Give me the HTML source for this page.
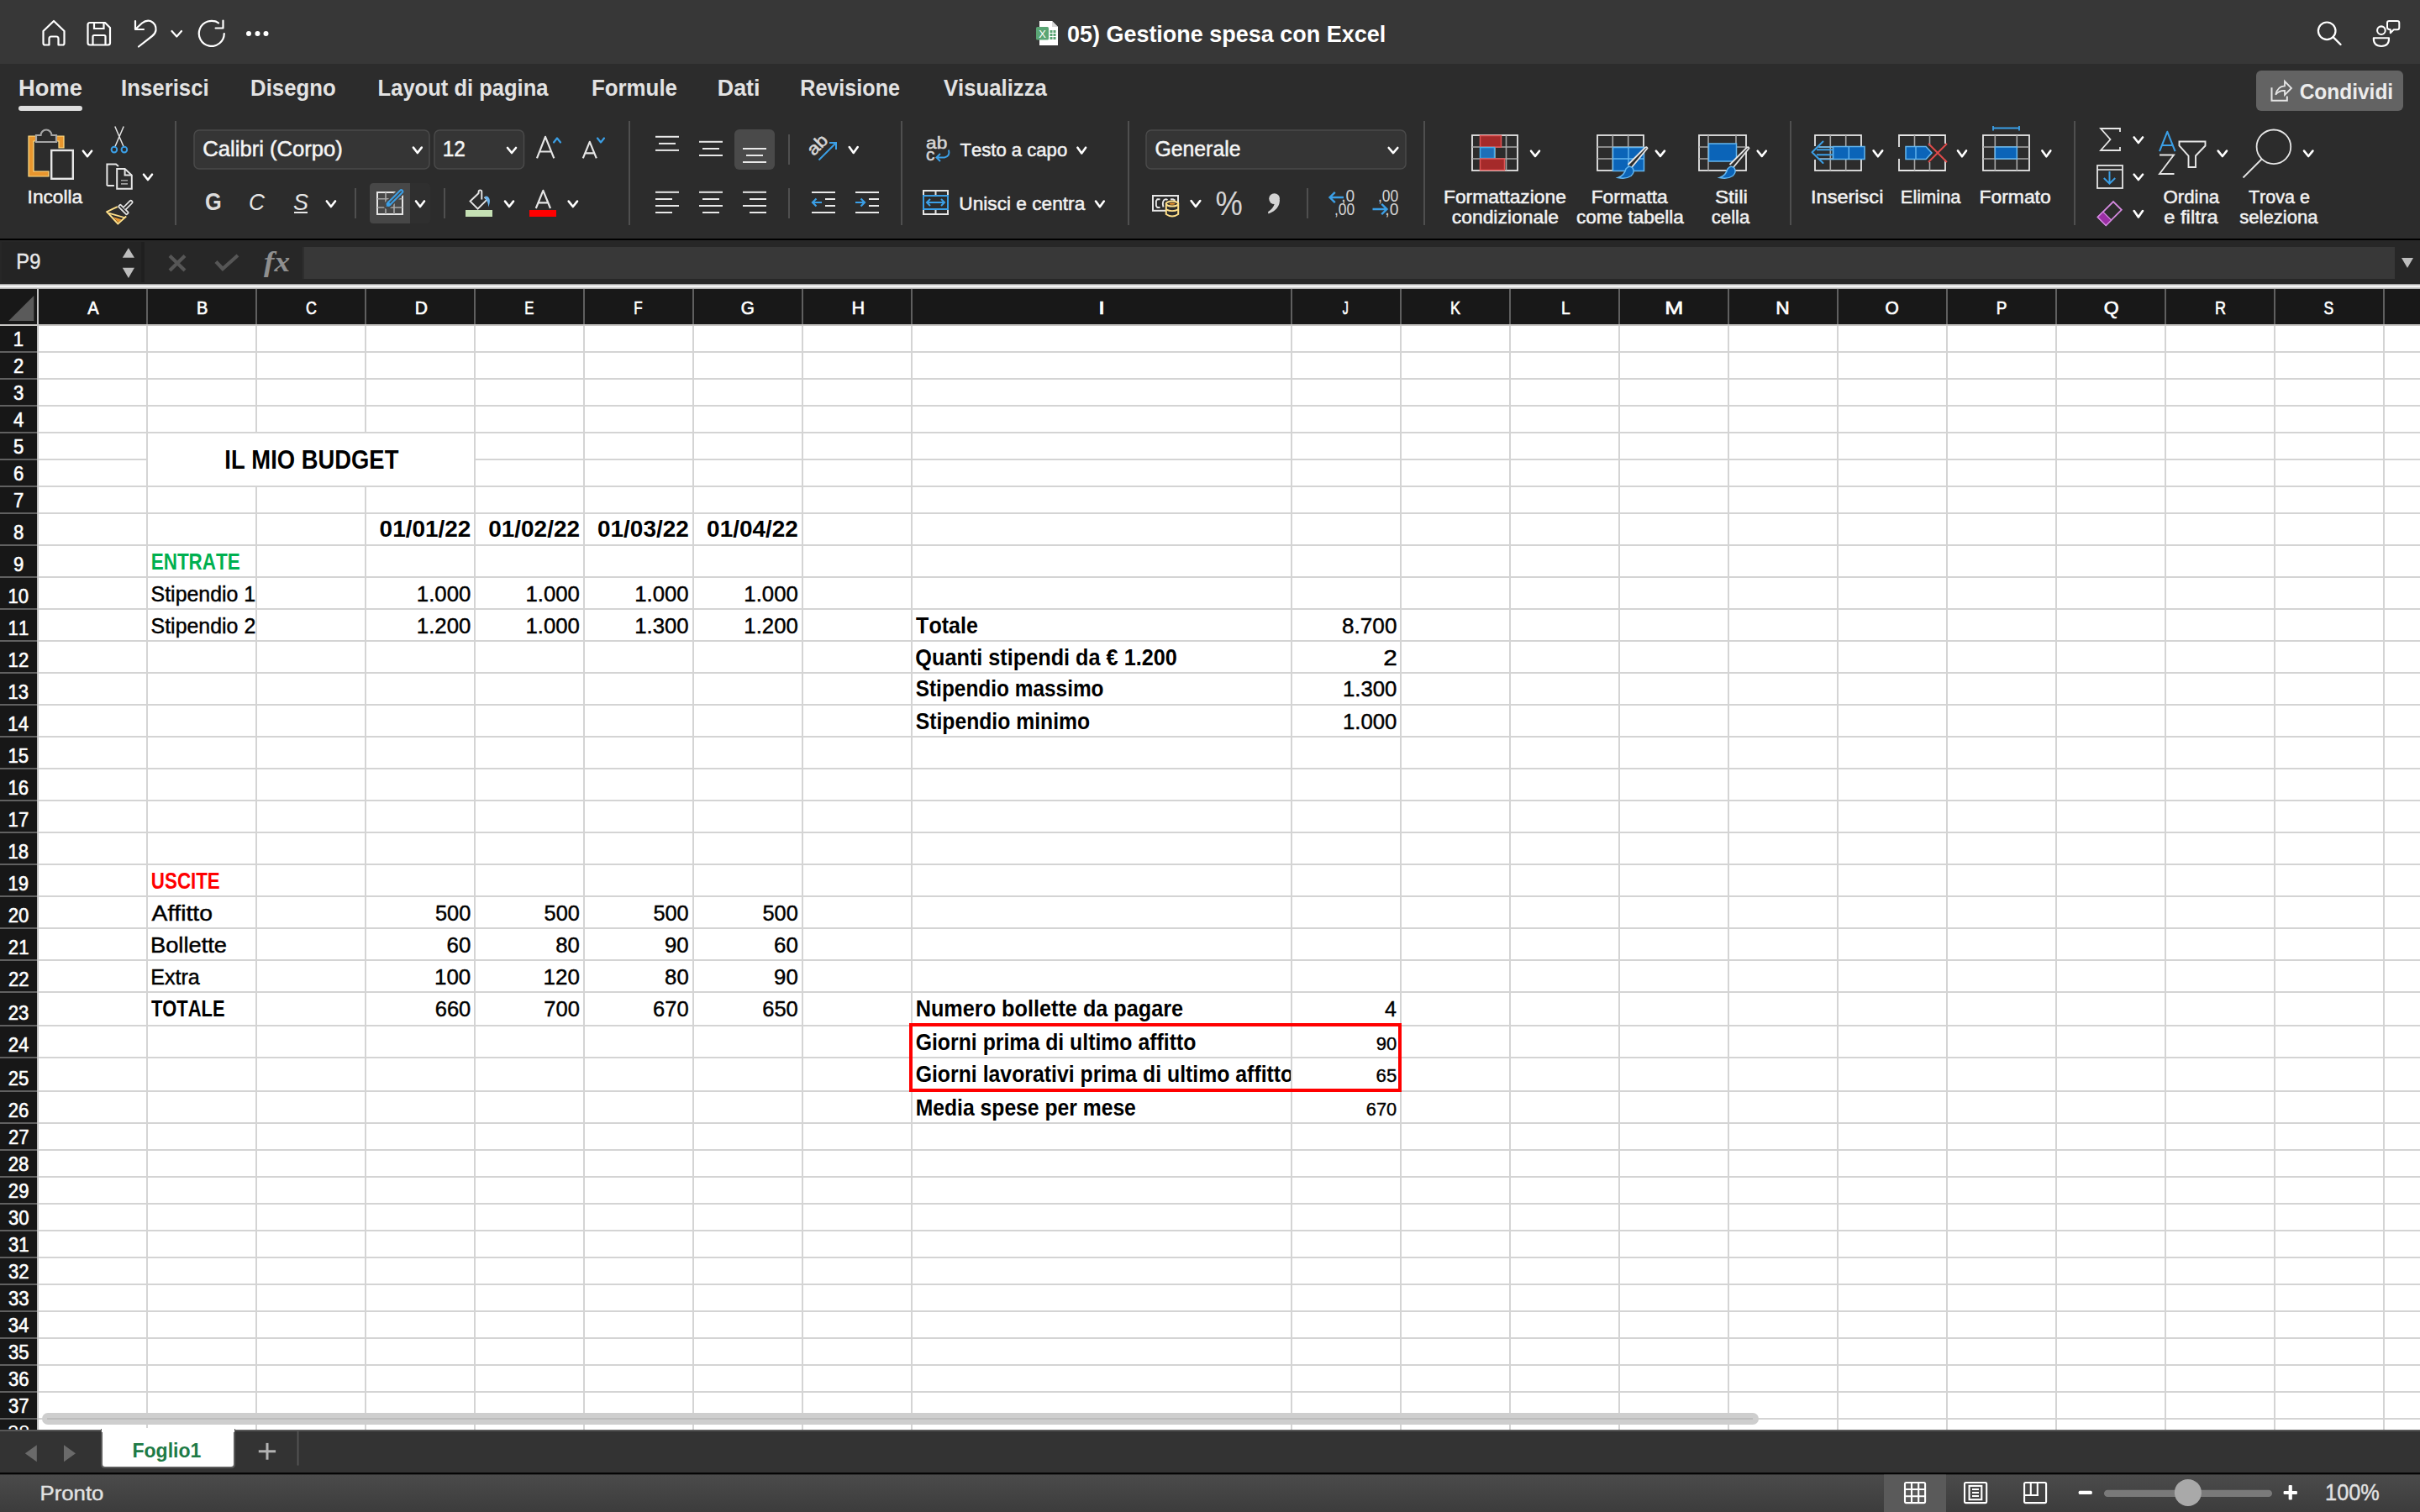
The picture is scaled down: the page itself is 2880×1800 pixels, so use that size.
<!DOCTYPE html><html><head><meta charset="utf-8"><style>html,body{margin:0;padding:0;background:#2c2c2c;overflow:hidden}svg{display:block}text{font-family:"Liberation Sans",sans-serif;font-kerning:none;font-variant-ligatures:none;white-space:pre}</style></head><body>
<svg width="2880" height="1800" viewBox="0 0 2880 1800">
<rect x="0" y="0" width="2880" height="76" fill="#373737" />
<rect x="0" y="76" width="2880" height="208" fill="#2c2c2c" />
<rect x="0" y="284" width="2880" height="2" fill="#000" />
<rect x="0" y="286" width="2880" height="52" fill="#272727" />
<defs><linearGradient id="sep" x1="0" y1="0" x2="0" y2="1"><stop offset="0" stop-color="#a9a9a9"/><stop offset="0.3" stop-color="#ececec"/><stop offset="0.65" stop-color="#f0f0f0"/><stop offset="1" stop-color="#b4b4b4"/></linearGradient><linearGradient id="stat" x1="0" y1="0" x2="0" y2="1"><stop offset="0" stop-color="#4b4b4b"/><stop offset="1" stop-color="#3c3c3c"/></linearGradient></defs>
<rect x="0" y="338" width="2880" height="1" fill="#a2a2a2" />
<rect x="0" y="339" width="2880" height="1" fill="#d2d2d2" />
<rect x="0" y="340" width="2880" height="1" fill="#f6f6f6" />
<rect x="0" y="341" width="2880" height="1" fill="#f3f3f3" />
<rect x="0" y="342" width="2880" height="1" fill="#d0d0d0" />
<rect x="0" y="343" width="2880" height="1" fill="#b2b2b2" />
<path d="M51.5,37 L64,25 L76.5,37 L76.5,51.5 Q76.5,53.5 74.5,53.5 L69.5,53.5 L69.5,46 Q69.5,43.5 67,43.5 L61,43.5 Q58.5,43.5 58.5,46 L58.5,53.5 L53.5,53.5 Q51.5,53.5 51.5,51.5 Z" stroke="#ffffff" stroke-width="2.2" fill="none" stroke-linejoin="round"/>
<path d="M107,27 L125,27 L131,33 L131,51 Q131,53.5 128.5,53.5 L107,53.5 Q104.5,53.5 104.5,51 L104.5,29.5 Q104.5,27 107,27 Z" stroke="#ffffff" stroke-width="2.2" fill="none" stroke-linejoin="round"/>
<path d="M112,27 L112,34 L123.5,34 L123.5,27" stroke="#ffffff" stroke-width="2.2" fill="none" />
<path d="M110.5,53.5 L110.5,43.5 Q110.5,42 112,42 L124,42 Q125.5,42 125.5,43.5 L125.5,53.5" stroke="#ffffff" stroke-width="2.2" fill="none" />
<path d="M161,25 L161,35 L171,35" stroke="#ffffff" stroke-width="2.2" fill="none" stroke-linecap="round" stroke-linejoin="round"/>
<path d="M161.5,34.5 L169,27.5 Q174,23.5 179,25 Q186,28 185.5,36 Q185,40 181,43 L165,55.5" stroke="#ffffff" stroke-width="2.2" fill="none" stroke-linecap="round"/>
<path d="M204.5,37 L210.3,43.5 L216,37" stroke="#ffffff" stroke-width="2.2" fill="none" stroke-linecap="round" stroke-linejoin="round"/>
<path d="M266.8,40 A15,15 0 1 1 260,27.3" stroke="#ffffff" stroke-width="2.2" fill="none" stroke-linecap="round"/>
<path d="M265.5,24.5 L265.5,33.5 L256.6,33.5" stroke="#ffffff" stroke-width="2.2" fill="none" stroke-linecap="round" stroke-linejoin="round"/>
<circle cx="296" cy="40" r="3" fill="#fff"/>
<circle cx="306.5" cy="40" r="3" fill="#fff"/>
<circle cx="316.5" cy="40" r="3" fill="#fff"/>
<path d="M1237,25 L1252,25 L1259,32 L1259,54 L1237,54 Z" stroke="none" stroke-width="0" fill="#ffffff" />
<path d="M1252,25 L1252,32 L1259,32 Z" stroke="none" stroke-width="0" fill="#d8d8d8" />
<rect x="1233" y="32" width="15" height="15.5" fill="#5aa574" rx="1.5" />
<text x="1236.21" y="44.50" font-size="13.08" textLength="8.56" lengthAdjust="spacingAndGlyphs" font-weight="normal" fill="#ffffff">X</text>
<rect x="1249.5" y="36" width="3" height="3" fill="#5aa574" />
<rect x="1253.5" y="36" width="3" height="3" fill="#5aa574" />
<rect x="1249.5" y="40" width="3" height="3" fill="#5aa574" />
<rect x="1253.5" y="40" width="3" height="3" fill="#5aa574" />
<rect x="1249.5" y="44" width="3" height="3" fill="#5aa574" />
<rect x="1253.5" y="44" width="3" height="3" fill="#5aa574" />
<text x="1269.93" y="49.60" font-size="28.49" textLength="379.28" lengthAdjust="spacingAndGlyphs" font-weight="bold" fill="#ffffff">05) Gestione spesa con Excel</text>
<circle cx="2769.2" cy="36.8" r="10.3" fill="none" stroke="#fff" stroke-width="2.2"/>
<path d="M2776.5,44 L2785.5,53" stroke="#ffffff" stroke-width="2.4" fill="none" stroke-linecap="round"/>
<circle cx="2833.9" cy="36.2" r="4.8" fill="none" stroke="#fff" stroke-width="2.1"/>
<path d="M2824.8,45.2 L2843,45.2 Q2843.5,55 2834,55 Q2824.5,55 2824.8,45.2 Z" stroke="#ffffff" stroke-width="2.1" fill="none" stroke-linejoin="round"/>
<path d="M2843.3,25 L2853,25 Q2855.3,25 2855.3,27.3 L2855.3,32.8 Q2855.3,35.3 2853,35.3 L2848.8,35.3 L2844.8,39.2 L2844.8,35.3 Q2841,35 2841,32.8 L2841,27.3 Q2841,25 2843.3,25 Z" stroke="#ffffff" stroke-width="2.0" fill="none" stroke-linejoin="round"/>
<text x="22.08" y="114.00" font-size="27.91" textLength="75.76" lengthAdjust="spacingAndGlyphs" font-weight="bold" fill="#e3e3e3">Home</text>
<text x="144.07" y="114.00" font-size="27.91" textLength="104.65" lengthAdjust="spacingAndGlyphs" font-weight="bold" fill="#e3e3e3">Inserisci</text>
<text x="298.08" y="114.00" font-size="27.91" textLength="101.53" lengthAdjust="spacingAndGlyphs" font-weight="bold" fill="#e3e3e3">Disegno</text>
<text x="449.59" y="114.00" font-size="27.91" textLength="202.95" lengthAdjust="spacingAndGlyphs" font-weight="bold" fill="#e3e3e3">Layout di pagina</text>
<text x="703.97" y="114.00" font-size="27.91" textLength="102.01" lengthAdjust="spacingAndGlyphs" font-weight="bold" fill="#e3e3e3">Formule</text>
<text x="853.80" y="114.00" font-size="27.91" textLength="50.70" lengthAdjust="spacingAndGlyphs" font-weight="bold" fill="#e3e3e3">Dati</text>
<text x="952.22" y="114.00" font-size="27.91" textLength="118.84" lengthAdjust="spacingAndGlyphs" font-weight="bold" fill="#e3e3e3">Revisione</text>
<text x="1122.92" y="114.00" font-size="27.91" textLength="123.01" lengthAdjust="spacingAndGlyphs" font-weight="bold" fill="#e3e3e3">Visualizza</text>
<rect x="22" y="126" width="76" height="6" fill="#dedede" rx="3" />
<rect x="2685" y="84" width="175" height="48" fill="#636363" rx="6" />
<text x="2736.70" y="118.00" font-size="26.16" textLength="111.44" lengthAdjust="spacingAndGlyphs" font-weight="bold" fill="#ececec">Condividi</text>
<path d="M2703.5,104.2 L2703.5,119.8 L2721.8,119.8 L2721.8,114.6" stroke="#e6e6e6" stroke-width="2" fill="none" stroke-linejoin="miter"/>
<path d="M2708.2,112.8 Q2710.5,102.5 2719,102.4 L2719,96.8 L2727,105 L2719,113 L2719,107.8 Q2712,107.5 2708.2,112.8 Z" stroke="#e6e6e6" stroke-width="1.8" fill="none" stroke-linejoin="miter"/>
<path d="M34,162 L76,162 L76,176 L70,176 L70,168 L40,168 L40,204 L58,204 L58,210 L34,210 Z" stroke="#ffe08a" stroke-width="1.2" fill="#e8962e" />
<path d="M43,161 L48.5,161 A6.5,6.5 0 0 1 61.5,161 L67,161 L67,169 L43,169 Z" stroke="#a6a6a6" stroke-width="2.2" fill="#2c2c2c" />
<rect x="61.2" y="179" width="25.6" height="33.8" fill="#2c2c2c" stroke="#e6e6e6" stroke-width="2.4"/>
<path d="M98.9,179.7 L104.0,186.2 L109.1,179.7" stroke="#ffffff" stroke-width="2.6" fill="none" stroke-linecap="round" stroke-linejoin="round"/>
<text x="32.61" y="241.90" font-size="22.67" textLength="65.49" lengthAdjust="spacingAndGlyphs" font-weight="normal" fill="#f2f2f2" stroke="#f2f2f2" stroke-width="0.5">Incolla</text>
<path d="M136.8,150.5 L147.5,175.5 M147.2,150.5 L136.5,175.5" stroke="#e6e6e6" stroke-width="1.5" fill="none" />
<circle cx="135.9" cy="178.1" r="3.3" fill="none" stroke="#3b9fe6" stroke-width="2"/>
<circle cx="147.9" cy="178.1" r="3.3" fill="none" stroke="#3b9fe6" stroke-width="2"/>
<path d="M127.4,221 L127.4,195.4 L138,195.4 L141,198" stroke="#e6e6e6" stroke-width="2.0" fill="none" />
<path d="M127.4,221 L135.9,221" stroke="#e6e6e6" stroke-width="2.0" fill="none" />
<path d="M139.2,201 L148.6,201 L156.8,208.6 L156.8,224.8 L139.2,224.8 Z" stroke="#e6e6e6" stroke-width="2.0" fill="#2c2c2c" />
<path d="M148.6,201 L148.6,208.6 L156.8,208.6" stroke="#e6e6e6" stroke-width="2.0" fill="none" />
<path d="M144,214.8 L152,214.8 M144,218.9 L152,218.9" stroke="#a0a0a0" stroke-width="1.6" fill="none" />
<path d="M171,207.7 L176.0,214 L181,207.7" stroke="#ffffff" stroke-width="2.6" fill="none" stroke-linecap="round" stroke-linejoin="round"/>
<path d="M139.8,246.2 Q133.5,249 127.3,252.2 L140.3,266.4 L150.2,257.4" stroke="#ffe08a" stroke-width="2.0" fill="none" stroke-linejoin="miter"/>
<path d="M129.8,253.8 L148,259" stroke="#ffe08a" stroke-width="1.8" fill="none" />
<path d="M134.5,258.2 L144.8,261.2 L140.6,264.8 Z" stroke="none" stroke-width="0" fill="#e8962e" />
<g transform="translate(145.1,251.3) rotate(-45)"><rect x="0.85" y="-6.9" width="3.4" height="13.8" rx="1" fill="#2c2c2c" stroke="#e6e6e6" stroke-width="1.7"/><path d="M4.25,-1.85 L15,-1.85 A1.85,1.85 0 0 1 15,1.85 L4.25,1.85" fill="#2c2c2c" stroke="#e6e6e6" stroke-width="1.7"/></g>
<rect x="208" y="144" width="2" height="124" fill="#4f4f4f" />
<rect x="231" y="155" width="280" height="46" fill="#353535" rx="6" stroke="#4a4a4a" stroke-width="1.5"/>
<text x="241.30" y="186.30" font-size="26.16" textLength="166.59" lengthAdjust="spacingAndGlyphs" font-weight="normal" fill="#f5f5f5" stroke="#f5f5f5" stroke-width="0.5">Calibri (Corpo)</text>
<path d="M491.9,175.6 L496.85,182 L501.8,175.6" stroke="#ffffff" stroke-width="2.6" fill="none" stroke-linecap="round" stroke-linejoin="round"/>
<rect x="517" y="155" width="106.5" height="46" fill="#353535" rx="6" stroke="#4a4a4a" stroke-width="1.5"/>
<text x="526.64" y="186.20" font-size="26.16" textLength="27.19" lengthAdjust="spacingAndGlyphs" font-weight="normal" fill="#f5f5f5" stroke="#f5f5f5" stroke-width="0.5">12</text>
<path d="M604,176 L609.0,182 L614,176" stroke="#ffffff" stroke-width="2.6" fill="none" stroke-linecap="round" stroke-linejoin="round"/>
<path d="M639,188.3 L649,162.8 L659.3,188.3 M642.2,180.5 L656,180.5" stroke="#e6e6e6" stroke-width="2.2" fill="none" stroke-linejoin="round"/>
<path d="M659,169.5 L663,164.5 L667,169.5" stroke="#3b9fe6" stroke-width="2.2" fill="none" stroke-linecap="round" stroke-linejoin="round"/>
<path d="M693.8,188.3 L701.8,168.8 L709.8,188.3 M696.5,182.3 L707.2,182.3" stroke="#e6e6e6" stroke-width="2.2" fill="none" stroke-linejoin="round"/>
<path d="M711,164.5 L715,169.5 L719,164.5" stroke="#3b9fe6" stroke-width="2.2" fill="none" stroke-linecap="round" stroke-linejoin="round"/>
<rect x="748" y="144" width="2" height="124" fill="#4f4f4f" />
<text x="243.96" y="249.80" font-size="28.78" textLength="19.71" lengthAdjust="spacingAndGlyphs" font-weight="bold" fill="#dcdcdc">G</text>
<text x="296" y="249.8" font-size="28.5" font-style="italic" fill="#e6e6e6" textLength="19" lengthAdjust="spacingAndGlyphs" font-family="Liberation Sans">C</text>
<text x="349" y="249.8" font-size="28.5" font-style="italic" fill="#e6e6e6" textLength="18" lengthAdjust="spacingAndGlyphs" font-family="Liberation Sans">S</text>
<rect x="350" y="252" width="16" height="2" fill="#e6e6e6" />
<path d="M388.8,239.5 L393.9,246 L399,239.5" stroke="#ffffff" stroke-width="2.6" fill="none" stroke-linecap="round" stroke-linejoin="round"/>
<rect x="422" y="224" width="2" height="36" fill="#4f4f4f" />
<path d="M444.5,218 L488,218 L488,266 L444.5,266 Q440,266 440,261.5 L440,222.5 Q440,218 444.5,218 Z" stroke="none" stroke-width="0" fill="#474747" />
<path d="M488,218 L507.5,218 Q512,218 512,222.5 L512,261.5 Q512,266 507.5,266 L488,266 Z" stroke="none" stroke-width="0" fill="#2f2f2f" />
<rect x="449" y="229" width="30" height="26" fill="none" stroke="#e6e6e6" stroke-width="2"/>
<path d="M459,229 L459,255 M469,229 L469,255 M449,236.8 L479,236.8 M449,247 L479,247" stroke="#a8a8a8" stroke-width="1.6" fill="none" />
<path d="M461,244.5 L477,228.5" stroke="#474747" stroke-width="9" fill="none" stroke-linecap="round"/>
<path d="M462.5,243 L477.5,228" stroke="#3b9fe6" stroke-width="5.5" fill="none" stroke-linecap="round"/>
<path d="M462.5,243 L477.5,228" stroke="#474747" stroke-width="1.6" fill="none" stroke-linecap="round"/>
<path d="M459.5,246 L461.5,239.5 L466,244 Z" stroke="none" stroke-width="0" fill="#3b9fe6" />
<path d="M495,239.5 L500.0,246 L505,239.5" stroke="#ffffff" stroke-width="2.6" fill="none" stroke-linecap="round" stroke-linejoin="round"/>
<rect x="528" y="224" width="2" height="36" fill="#4f4f4f" />
<path d="M569.6,230 L559.6,239.6 L568.6,248.6 L579.6,237.6 L576.6,234.6" stroke="#e6e6e6" stroke-width="2.0" fill="none" stroke-linejoin="miter"/>
<path d="M569.6,230.5 L569.6,228.2 A1.85,1.85 0 0 1 573.3,228.2 L573.3,237.6" stroke="#e6e6e6" stroke-width="1.9" fill="none" />
<path d="M576.5,234.8 Q578,232.5 580.5,234 Q583.5,236.5 582.8,241 L581.5,246.4 Q580.5,240 578.5,237.8 Z" stroke="none" stroke-width="0" fill="#6cb4ee" />
<rect x="554" y="250" width="32" height="8" fill="#c5e0b4" />
<path d="M601,239.6 L606.0,246 L611,239.6" stroke="#ffffff" stroke-width="2.6" fill="none" stroke-linecap="round" stroke-linejoin="round"/>
<path d="M637.8,248 L646.4,226.8 L655,248 M640.5,241.3 L652.3,241.3" stroke="#e6e6e6" stroke-width="2.2" fill="none" stroke-linejoin="round"/>
<rect x="630" y="250" width="32" height="8" fill="#ff0000" />
<path d="M676.7,239.6 L681.85,246 L687,239.6" stroke="#ffffff" stroke-width="2.6" fill="none" stroke-linecap="round" stroke-linejoin="round"/>
<rect x="780.0" y="161.8" width="28" height="2" fill="#e8e8e8" />
<rect x="784.0" y="169.9" width="20" height="2" fill="#e8e8e8" />
<rect x="780.0" y="177.9" width="28" height="2" fill="#e8e8e8" />
<rect x="832.0" y="167.8" width="28" height="2" fill="#e8e8e8" />
<rect x="836.0" y="176" width="20" height="2" fill="#e8e8e8" />
<rect x="832.0" y="184" width="28" height="2" fill="#e8e8e8" />
<rect x="874" y="154" width="48" height="48" fill="#4a4a4a" rx="6" />
<rect x="884.0" y="176" width="28" height="2" fill="#e8e8e8" />
<rect x="888.0" y="184" width="20" height="2" fill="#e8e8e8" />
<rect x="884.0" y="192" width="28" height="2" fill="#e8e8e8" />
<rect x="938" y="160" width="2" height="36" fill="#4f4f4f" />
<text x="0" y="0" font-size="20.5" fill="#d6d6d6" stroke="#d6d6d6" stroke-width="0.6" transform="translate(968.6,186.3) rotate(-45)" textLength="25.5" lengthAdjust="spacingAndGlyphs">ab</text>
<path d="M974.5,190.5 L995,170" stroke="#3b9fe6" stroke-width="2.0" fill="none" />
<path d="M987,170 L995,170 L995,178" stroke="#3b9fe6" stroke-width="2.0" fill="none" />
<path d="M1010.8,175 L1015.75,182 L1020.7,175" stroke="#ffffff" stroke-width="2.6" fill="none" stroke-linecap="round" stroke-linejoin="round"/>
<rect x="780" y="227.8" width="28" height="2" fill="#e8e8e8" />
<rect x="780" y="236" width="20" height="2" fill="#e8e8e8" />
<rect x="780" y="244" width="28" height="2" fill="#e8e8e8" />
<rect x="780" y="252" width="20" height="2" fill="#e8e8e8" />
<rect x="832.0" y="227.8" width="28" height="2" fill="#e8e8e8" />
<rect x="836.0" y="236" width="20" height="2" fill="#e8e8e8" />
<rect x="832.0" y="244" width="28" height="2" fill="#e8e8e8" />
<rect x="836.0" y="252" width="20" height="2" fill="#e8e8e8" />
<rect x="884" y="227.8" width="28" height="2" fill="#e8e8e8" />
<rect x="892" y="236" width="20" height="2" fill="#e8e8e8" />
<rect x="884" y="244" width="28" height="2" fill="#e8e8e8" />
<rect x="892" y="252" width="20" height="2" fill="#e8e8e8" />
<rect x="938" y="224" width="2" height="36" fill="#4f4f4f" />
<rect x="966" y="228" width="28" height="2" fill="#e8e8e8" />
<rect x="982" y="236" width="12" height="2" fill="#e8e8e8" />
<rect x="982" y="244" width="12" height="2" fill="#e8e8e8" />
<rect x="966" y="252" width="28" height="2" fill="#e8e8e8" />
<path d="M978,241 L967.5,241 M971.5,236.5 L967,241 L971.5,245.5" stroke="#3b9fe6" stroke-width="2.2" fill="none" />
<rect x="1018" y="228" width="28" height="2" fill="#e8e8e8" />
<rect x="1034" y="236" width="12" height="2" fill="#e8e8e8" />
<rect x="1034" y="244" width="12" height="2" fill="#e8e8e8" />
<rect x="1018" y="252" width="28" height="2" fill="#e8e8e8" />
<path d="M1018,241 L1028.5,241 M1024.5,236.5 L1029,241 L1024.5,245.5" stroke="#3b9fe6" stroke-width="2.2" fill="none" />
<rect x="1072" y="144" width="2" height="124" fill="#4f4f4f" />
<text x="1102.03" y="177.00" font-size="20.35" textLength="25.32" lengthAdjust="spacingAndGlyphs" font-weight="normal" fill="#d6d6d6" stroke="#d6d6d6" stroke-width="0.5">ab</text>
<text x="1102.11" y="191.40" font-size="19.62" textLength="10.44" lengthAdjust="spacingAndGlyphs" font-weight="normal" fill="#d6d6d6" stroke="#d6d6d6" stroke-width="0.5">c</text>
<path d="M1129,178.5 Q1131,186 1124,187.5 L1115,187.5 M1119,183 L1114.5,187.5 L1119,192" stroke="#3b9fe6" stroke-width="2.0" fill="none" />
<text x="1142.40" y="186.10" font-size="22.82" textLength="127.83" lengthAdjust="spacingAndGlyphs" font-weight="normal" fill="#f2f2f2" stroke="#f2f2f2" stroke-width="0.5">Testo a capo</text>
<path d="M1282.4,175.7 L1287.25,182.4 L1292.1,175.7" stroke="#ffffff" stroke-width="2.6" fill="none" stroke-linecap="round" stroke-linejoin="round"/>
<rect x="1099" y="227" width="29" height="28" fill="none" stroke="#e6e6e6" stroke-width="2"/>
<path d="M1113.5,227 L1113.5,233 M1113.5,249 L1113.5,255" stroke="#e6e6e6" stroke-width="2" fill="none" />
<rect x="1099" y="233" width="29" height="16" fill="#2c2c2c" stroke="#3b9fe6" stroke-width="2"/>
<path d="M1103,241 L1124,241 M1107,237 L1103,241 L1107,245 M1120,237 L1124,241 L1120,245" stroke="#3b9fe6" stroke-width="2" fill="none" />
<text x="1141.35" y="249.70" font-size="22.82" textLength="149.95" lengthAdjust="spacingAndGlyphs" font-weight="normal" fill="#f2f2f2" stroke="#f2f2f2" stroke-width="0.5">Unisci e centra</text>
<path d="M1304,239.6 L1308.9,246.2 L1313.8,239.6" stroke="#ffffff" stroke-width="2.6" fill="none" stroke-linecap="round" stroke-linejoin="round"/>
<rect x="1342" y="144" width="2" height="124" fill="#4f4f4f" />
<rect x="1364" y="155" width="309" height="46" fill="#353535" rx="6" stroke="#4a4a4a" stroke-width="1.5"/>
<text x="1374.45" y="186.10" font-size="25.87" textLength="102.05" lengthAdjust="spacingAndGlyphs" font-weight="normal" fill="#f5f5f5" stroke="#f5f5f5" stroke-width="0.5">Generale</text>
<path d="M1652.7,176 L1658.0,182.1 L1663.3,176" stroke="#ffffff" stroke-width="2.6" fill="none" stroke-linecap="round" stroke-linejoin="round"/>
<rect x="1372" y="233" width="30" height="17.8" fill="none" stroke="#e6e6e6" stroke-width="2"/>
<path d="M1380.5,237.2 L1377.3,237.2 L1375.9,239.2 L1375.9,245 L1377.3,247 L1380.5,247" stroke="#e6e6e6" stroke-width="1.9" fill="none" />
<path d="M1384.5,246.5 Q1383,241 1385,238.5 Q1387,236.3 1389.5,238" stroke="#e6e6e6" stroke-width="1.9" fill="none" />
<path d="M1393,237.3 L1396,237.3 L1398.5,238.6" stroke="#e6e6e6" stroke-width="1.9" fill="none" />
<path d="M1387.8,242.6 L1387.8,255 Q1395,260 1402.2,255 L1402.2,242.6 Z" stroke="#ffe08a" stroke-width="2.0" fill="#2c2c2c" />
<ellipse cx="1395" cy="242.6" rx="7.2" ry="3" fill="#2c2c2c" stroke="#ffe08a" stroke-width="2"/>
<ellipse cx="1395" cy="242.6" rx="3.5" ry="1.2" fill="#e8902a"/>
<path d="M1387.8,249.3 Q1395,253 1402.2,249.3" stroke="#ffe08a" stroke-width="1.9" fill="none" />
<path d="M1417.6,239 L1422.9499999999998,246 L1428.3,239" stroke="#ffffff" stroke-width="2.6" fill="none" stroke-linecap="round" stroke-linejoin="round"/>
<text x="1446.61" y="256.00" font-size="40.70" textLength="32.29" lengthAdjust="spacingAndGlyphs" font-weight="normal" fill="#d4d4d4">%</text>
<circle cx="1516.6" cy="236.6" r="6.4" fill="#d4d4d4"/>
<path d="M1522.9,237.5 Q1523.5,249 1509.5,254.5 L1509,252.3 Q1515.5,248 1516.8,242.5 Z" stroke="none" stroke-width="0" fill="#d4d4d4" />
<rect x="1555" y="224" width="2" height="36" fill="#4f4f4f" />
<text x="1596.28" y="240.00" font-size="20.35" textLength="15.97" lengthAdjust="spacingAndGlyphs" font-weight="normal" fill="#d4d4d4">,0</text>
<text x="1587.93" y="255.80" font-size="20.35" textLength="24.25" lengthAdjust="spacingAndGlyphs" font-weight="normal" fill="#d4d4d4">,00</text>
<path d="M1599,235 L1582.5,235 M1588.8,228.8 L1582.5,235 L1588.8,241.2" stroke="#3b9fe6" stroke-width="2.4" fill="none" />
<text x="1639.93" y="240.00" font-size="20.35" textLength="24.36" lengthAdjust="spacingAndGlyphs" font-weight="normal" fill="#d4d4d4">,00</text>
<text x="1648.27" y="255.80" font-size="20.35" textLength="16.09" lengthAdjust="spacingAndGlyphs" font-weight="normal" fill="#d4d4d4">,0</text>
<path d="M1633.5,249 L1650.5,249 M1644.2,242.8 L1650.5,249 L1644.2,255.2" stroke="#3b9fe6" stroke-width="2.4" fill="none" />
<rect x="1694" y="144" width="2" height="124" fill="#4f4f4f" />
<rect x="1752" y="161" width="54" height="42" fill="none" stroke="#e6e6e6" stroke-width="1.8"/>
<path d="M1765.5,161 L1765.5,203" stroke="#a8a8a8" stroke-width="1.6" fill="none" />
<path d="M1779.0,161 L1779.0,203" stroke="#a8a8a8" stroke-width="1.6" fill="none" />
<path d="M1792.5,161 L1792.5,203" stroke="#a8a8a8" stroke-width="1.6" fill="none" />
<path d="M1752,175.0 L1806,175.0" stroke="#a8a8a8" stroke-width="1.6" fill="none" />
<path d="M1752,189.0 L1806,189.0" stroke="#a8a8a8" stroke-width="1.6" fill="none" />
<rect x="1761.5" y="161.5" width="25" height="13.5" fill="#a52a2a" stroke="#e05555" stroke-width="1.5"/>
<rect x="1761.5" y="175.5" width="17" height="13" fill="#1e6fb8" stroke="#4aaee8" stroke-width="1.5"/>
<rect x="1761.5" y="189" width="29" height="13.5" fill="#a52a2a" stroke="#e05555" stroke-width="1.5"/>
<path d="M1822,179.7 L1827.0,185.9 L1832,179.7" stroke="#ffffff" stroke-width="2.6" fill="none" stroke-linecap="round" stroke-linejoin="round"/>
<text x="1717.93" y="241.90" font-size="22.67" textLength="146.09" lengthAdjust="spacingAndGlyphs" font-weight="normal" fill="#f2f2f2" stroke="#f2f2f2" stroke-width="0.5">Formattazione</text>
<text x="1727.73" y="265.50" font-size="22.67" textLength="127.29" lengthAdjust="spacingAndGlyphs" font-weight="normal" fill="#f2f2f2" stroke="#f2f2f2" stroke-width="0.5">condizionale</text>
<rect x="1901" y="161" width="55" height="42" fill="none" stroke="#e6e6e6" stroke-width="1.8"/>
<path d="M1919.3,161 L1919.3,203" stroke="#a8a8a8" stroke-width="1.6" fill="none" />
<path d="M1937.7,161 L1937.7,203" stroke="#a8a8a8" stroke-width="1.6" fill="none" />
<path d="M1901,175.0 L1956,175.0" stroke="#a8a8a8" stroke-width="1.6" fill="none" />
<path d="M1901,189.0 L1956,189.0" stroke="#a8a8a8" stroke-width="1.6" fill="none" />
<rect x="1919.5" y="175.5" width="37" height="28" fill="#0b64b8" stroke="#63b6f0" stroke-width="1.5"/>
<path d="M1938,175.5 L1938,203 M1919.5,189 L1956,189" stroke="#63b6f0" stroke-width="1.4" fill="none" />
<path d="M1937.5,196 L1957.5,176 Q1960,174 1960.5,176.5 L1942,199" stroke="#e6e6e6" stroke-width="1.8" fill="#2c2c2c" />
<path d="M1925.5,211.5 Q1933,209 1935,201 Q1939,196 1943,200 Q1946,205 1941,209.5 Q1935,213.5 1925.5,211.5 Z" stroke="#63b6f0" stroke-width="1.5" fill="#0b64b8" />
<path d="M1970.8,179.7 L1975.9,185.9 L1981,179.7" stroke="#ffffff" stroke-width="2.6" fill="none" stroke-linecap="round" stroke-linejoin="round"/>
<text x="1893.63" y="241.90" font-size="22.67" textLength="91.07" lengthAdjust="spacingAndGlyphs" font-weight="normal" fill="#f2f2f2" stroke="#f2f2f2" stroke-width="0.5">Formatta</text>
<text x="1875.94" y="265.50" font-size="22.67" textLength="127.96" lengthAdjust="spacingAndGlyphs" font-weight="normal" fill="#f2f2f2" stroke="#f2f2f2" stroke-width="0.5">come tabella</text>
<rect x="2022" y="161" width="56" height="42" fill="none" stroke="#e6e6e6" stroke-width="1.8"/>
<path d="M2033,161 L2033,203 M2066,161 L2066,175 M2022,175 L2078,175 M2022,189 L2033,189" stroke="#a8a8a8" stroke-width="1.6" fill="none" />
<rect x="2033.5" y="171" width="33" height="21" fill="#0b64b8" stroke="#63b6f0" stroke-width="1.5"/>
<path d="M2058.5,196 L2078.5,176 Q2081,174 2081.5,176.5 L2063,199" stroke="#e6e6e6" stroke-width="1.8" fill="#2c2c2c" />
<path d="M2046.5,211.5 Q2054,209 2056,201 Q2060,196 2064,200 Q2067,205 2062,209.5 Q2056,213.5 2046.5,211.5 Z" stroke="#63b6f0" stroke-width="1.5" fill="#0b64b8" />
<path d="M2091.7,179.7 L2096.75,185.9 L2101.8,179.7" stroke="#ffffff" stroke-width="2.6" fill="none" stroke-linecap="round" stroke-linejoin="round"/>
<text x="2040.90" y="241.90" font-size="22.67" textLength="39.03" lengthAdjust="spacingAndGlyphs" font-weight="normal" fill="#f2f2f2" stroke="#f2f2f2" stroke-width="0.5">Stili</text>
<text x="2036.76" y="265.50" font-size="22.67" textLength="45.64" lengthAdjust="spacingAndGlyphs" font-weight="normal" fill="#f2f2f2" stroke="#f2f2f2" stroke-width="0.5">cella</text>
<rect x="2130" y="144" width="2" height="124" fill="#4f4f4f" />
<rect x="2160" y="161" width="55" height="42" fill="none" stroke="#e6e6e6" stroke-width="1.8"/>
<path d="M2178.3,161 L2178.3,203" stroke="#a8a8a8" stroke-width="1.6" fill="none" />
<path d="M2196.7,161 L2196.7,203" stroke="#a8a8a8" stroke-width="1.6" fill="none" />
<path d="M2160,175.0 L2215,175.0" stroke="#a8a8a8" stroke-width="1.6" fill="none" />
<path d="M2160,189.0 L2215,189.0" stroke="#a8a8a8" stroke-width="1.6" fill="none" />
<rect x="2157" y="174" width="6" height="16" fill="#2c2c2c" />
<rect x="2181.5" y="174.5" width="37.5" height="15" fill="#0b64b8" stroke="#63b6f0" stroke-width="1.5"/>
<path d="M2200.3,174.5 L2200.3,189.5" stroke="#63b6f0" stroke-width="1.4" fill="none" />
<path d="M2165,175 L2181.5,175 L2181.5,189.5 L2165,189.5" stroke="#63b6f0" stroke-width="1.4" fill="none" />
<path d="M2162,178.3 L2181.5,178.3 M2162,184.3 L2181.5,184.3" stroke="#3b9fe6" stroke-width="2.0" fill="none" />
<path d="M2169.5,168.5 L2156.5,181.3 L2169.5,194" stroke="#3b9fe6" stroke-width="2.0" fill="none" stroke-linecap="round" stroke-linejoin="round"/>
<path d="M2229.6,179.4 L2234.8999999999996,186.3 L2240.2,179.4" stroke="#ffffff" stroke-width="2.6" fill="none" stroke-linecap="round" stroke-linejoin="round"/>
<text x="2155.03" y="241.90" font-size="22.67" textLength="86.36" lengthAdjust="spacingAndGlyphs" font-weight="normal" fill="#f2f2f2" stroke="#f2f2f2" stroke-width="0.5">Inserisci</text>
<path d="M2260,175 L2260,161 L2315,161 L2315,171 M2315,190 L2315,203 L2260,203 L2260,189" stroke="#e6e6e6" stroke-width="1.8" fill="none" />
<path d="M2278.5,161 L2278.5,175 M2296.5,161 L2296.5,174 M2278.5,189 L2278.5,203 M2296.5,193 L2296.5,203" stroke="#a8a8a8" stroke-width="1.6" fill="none" />
<path d="M2268,174.5 L2292,174.5 L2299,182 L2292,189.5 L2268,189.5 Z" stroke="#63b6f0" stroke-width="1.5" fill="#0b64b8" />
<path d="M2280,174.5 L2280,189.5" stroke="#63b6f0" stroke-width="1.4" fill="none" />
<path d="M2295,171 L2317,193 M2317,171 L2295,193" stroke="#e04a4a" stroke-width="1.9" fill="none" />
<path d="M2330,179.4 L2335.0,186.3 L2340,179.4" stroke="#ffffff" stroke-width="2.6" fill="none" stroke-linecap="round" stroke-linejoin="round"/>
<text x="2261.81" y="241.90" font-size="22.67" textLength="71.69" lengthAdjust="spacingAndGlyphs" font-weight="normal" fill="#f2f2f2" stroke="#f2f2f2" stroke-width="0.5">Elimina</text>
<rect x="2360" y="161" width="55" height="42" fill="none" stroke="#e6e6e6" stroke-width="1.8"/>
<path d="M2374.3,161 L2374.3,203 M2400.3,161 L2400.3,203 M2360,175 L2415,175 M2360,189 L2415,189" stroke="#a8a8a8" stroke-width="1.6" fill="none" />
<rect x="2374.3" y="175" width="26" height="14" fill="#0b64b8" stroke="#63b6f0" stroke-width="1.5"/>
<path d="M2372,152.5 L2403,152.5 M2372,150 L2372,155.5 M2403,150 L2403,155.5" stroke="#3b9fe6" stroke-width="1.8" fill="none" />
<path d="M2430.4,179.4 L2435.3500000000004,186.3 L2440.3,179.4" stroke="#ffffff" stroke-width="2.6" fill="none" stroke-linecap="round" stroke-linejoin="round"/>
<text x="2355.42" y="241.90" font-size="22.67" textLength="85.34" lengthAdjust="spacingAndGlyphs" font-weight="normal" fill="#f2f2f2" stroke="#f2f2f2" stroke-width="0.5">Formato</text>
<rect x="2468" y="144" width="2" height="124" fill="#4f4f4f" />
<path d="M2523,157 L2523,153 L2500,153 L2511.5,166 L2500,179 L2523,179 L2523,175" stroke="#e6e6e6" stroke-width="1.8" fill="none" />
<path d="M2539.7,163.5 L2544.85,170 L2550,163.5" stroke="#ffffff" stroke-width="2.6" fill="none" stroke-linecap="round" stroke-linejoin="round"/>
<rect x="2496" y="197" width="30" height="27" fill="none" stroke="#e6e6e6" stroke-width="1.8"/>
<path d="M2496,202 L2526,202" stroke="#e6e6e6" stroke-width="1.6" fill="none" />
<path d="M2510.5,204 L2510.5,218.5 M2503.8,212 L2510.5,218.7 L2517.2,212" stroke="#3b9fe6" stroke-width="2.0" fill="none" />
<path d="M2539.7,207.7 L2544.85,214 L2550,207.7" stroke="#ffffff" stroke-width="2.6" fill="none" stroke-linecap="round" stroke-linejoin="round"/>
<path d="M2496.5,258.5 L2515,240 L2524.8,249.8 L2506.3,268.3 Z" stroke="#d58ae0" stroke-width="1.8" fill="#2c2c2c" />
<path d="M2496.5,258.5 L2502.8,252.2 L2512.6,262 L2506.3,268.3 Z" stroke="#d58ae0" stroke-width="1.2" fill="#9b2fa5" />
<path d="M2539.7,251 L2544.85,258.4 L2550,251" stroke="#ffffff" stroke-width="2.6" fill="none" stroke-linecap="round" stroke-linejoin="round"/>
<path d="M2570,180.2 L2579.3,156.8 L2588.6,180.2 M2573.2,173 L2585.4,173" stroke="#3b9fe6" stroke-width="2.1" fill="none" stroke-linejoin="round"/>
<path d="M2570,184.5 L2587,184.5 L2570,207 L2587.5,207" stroke="#e6e6e6" stroke-width="1.9" fill="none" />
<path d="M2593.5,168.5 L2624.5,168.5 L2624.5,173.5 L2613,185.5 L2613,199 L2604.5,199 L2604.5,185.5 L2593.5,173.5 Z" stroke="#e6e6e6" stroke-width="1.9" fill="none" stroke-linejoin="miter"/>
<path d="M2639.7,179.6 L2644.85,186 L2650,179.6" stroke="#ffffff" stroke-width="2.6" fill="none" stroke-linecap="round" stroke-linejoin="round"/>
<text x="2574.45" y="241.90" font-size="22.67" textLength="66.75" lengthAdjust="spacingAndGlyphs" font-weight="normal" fill="#f2f2f2" stroke="#f2f2f2" stroke-width="0.5">Ordina</text>
<text x="2575.29" y="265.70" font-size="22.67" textLength="64.51" lengthAdjust="spacingAndGlyphs" font-weight="normal" fill="#f2f2f2" stroke="#f2f2f2" stroke-width="0.5">e filtra</text>
<circle cx="2705.9" cy="174.8" r="20.3" fill="none" stroke="#e6e6e6" stroke-width="1.8"/>
<path d="M2691.5,189.5 L2669.5,211.5" stroke="#e6e6e6" stroke-width="1.8" fill="none" />
<path d="M2742,179.6 L2747.2,186 L2752.4,179.6" stroke="#ffffff" stroke-width="2.6" fill="none" stroke-linecap="round" stroke-linejoin="round"/>
<text x="2675.92" y="241.90" font-size="22.67" textLength="73.04" lengthAdjust="spacingAndGlyphs" font-weight="normal" fill="#f2f2f2" stroke="#f2f2f2" stroke-width="0.5">Trova e</text>
<text x="2665.18" y="265.70" font-size="22.67" textLength="93.42" lengthAdjust="spacingAndGlyphs" font-weight="normal" fill="#f2f2f2" stroke="#f2f2f2" stroke-width="0.5">seleziona</text>
<rect x="2" y="288" width="166" height="48" fill="#242424" />
<rect x="168" y="288" width="4" height="48" fill="#1f1f1f" />
<text x="19.36" y="320.00" font-size="26.45" textLength="28.96" lengthAdjust="spacingAndGlyphs" font-weight="normal" fill="#e8e8e8" stroke="#e8e8e8" stroke-width="0.4">P9</text>
<path d="M145.8,306.8 L152.9,295.2 L160,306.8 Z" stroke="none" stroke-width="0" fill="#bdbdbd" />
<path d="M145.8,318.8 L160,318.8 L152.9,330.9 Z" stroke="none" stroke-width="0" fill="#bdbdbd" />
<path d="M202,304.5 L220,322 M220,304.5 L202,322" stroke="#565656" stroke-width="4.2" fill="none" />
<path d="M257,311.5 L265,320 L283,304" stroke="#565656" stroke-width="4.2" fill="none" />
<text x="314" y="323" font-size="34" font-style="italic" font-weight="bold" style="font-family:Liberation Serif" fill="#8f8f8f" textLength="31" lengthAdjust="spacingAndGlyphs">fx</text>
<rect x="360" y="294" width="2490" height="38" fill="#383838" />
<rect x="360" y="294" width="2" height="38" fill="#2e2e2e" />
<path d="M2858,307 L2872,307 L2865,319 Z" stroke="none" stroke-width="0" fill="#bdbdbd" />
<rect x="0" y="344" width="2880" height="42" fill="#181818" />
<rect x="0" y="386" width="2880" height="2" fill="#c8c6c4" />
<rect x="0" y="388" width="44" height="1314" fill="#171717" />
<rect x="46" y="388" width="2834" height="1314" fill="#ffffff" />
<rect x="44" y="344" width="2" height="1358" fill="#c4c4c4" />
<path d="M10.2,382 L40.3,352 L40.3,382 Z" stroke="none" stroke-width="0" fill="#5a5a5a" />
<rect x="46" y="418" width="2834" height="2" fill="#d4d4d4" />
<rect x="0" y="418" width="44" height="2" fill="#606060" />
<rect x="46" y="450" width="2834" height="2" fill="#d4d4d4" />
<rect x="0" y="450" width="44" height="2" fill="#606060" />
<rect x="46" y="482" width="2834" height="2" fill="#d4d4d4" />
<rect x="0" y="482" width="44" height="2" fill="#606060" />
<rect x="46" y="514" width="2834" height="2" fill="#d4d4d4" />
<rect x="0" y="514" width="44" height="2" fill="#606060" />
<rect x="46" y="546" width="2834" height="2" fill="#d4d4d4" />
<rect x="0" y="546" width="44" height="2" fill="#606060" />
<rect x="46" y="578" width="2834" height="2" fill="#d4d4d4" />
<rect x="0" y="578" width="44" height="2" fill="#606060" />
<rect x="46" y="610" width="2834" height="2" fill="#d4d4d4" />
<rect x="0" y="610" width="44" height="2" fill="#606060" />
<rect x="46" y="648" width="2834" height="2" fill="#d4d4d4" />
<rect x="0" y="648" width="44" height="2" fill="#606060" />
<rect x="46" y="686" width="2834" height="2" fill="#d4d4d4" />
<rect x="0" y="686" width="44" height="2" fill="#606060" />
<rect x="46" y="724" width="2834" height="2" fill="#d4d4d4" />
<rect x="0" y="724" width="44" height="2" fill="#606060" />
<rect x="46" y="762" width="2834" height="2" fill="#d4d4d4" />
<rect x="0" y="762" width="44" height="2" fill="#606060" />
<rect x="46" y="800" width="2834" height="2" fill="#d4d4d4" />
<rect x="0" y="800" width="44" height="2" fill="#606060" />
<rect x="46" y="838" width="2834" height="2" fill="#d4d4d4" />
<rect x="0" y="838" width="44" height="2" fill="#606060" />
<rect x="46" y="876" width="2834" height="2" fill="#d4d4d4" />
<rect x="0" y="876" width="44" height="2" fill="#606060" />
<rect x="46" y="914" width="2834" height="2" fill="#d4d4d4" />
<rect x="0" y="914" width="44" height="2" fill="#606060" />
<rect x="46" y="952" width="2834" height="2" fill="#d4d4d4" />
<rect x="0" y="952" width="44" height="2" fill="#606060" />
<rect x="46" y="990" width="2834" height="2" fill="#d4d4d4" />
<rect x="0" y="990" width="44" height="2" fill="#606060" />
<rect x="46" y="1028" width="2834" height="2" fill="#d4d4d4" />
<rect x="0" y="1028" width="44" height="2" fill="#606060" />
<rect x="46" y="1066" width="2834" height="2" fill="#d4d4d4" />
<rect x="0" y="1066" width="44" height="2" fill="#606060" />
<rect x="46" y="1104" width="2834" height="2" fill="#d4d4d4" />
<rect x="0" y="1104" width="44" height="2" fill="#606060" />
<rect x="46" y="1142" width="2834" height="2" fill="#d4d4d4" />
<rect x="0" y="1142" width="44" height="2" fill="#606060" />
<rect x="46" y="1180" width="2834" height="2" fill="#d4d4d4" />
<rect x="0" y="1180" width="44" height="2" fill="#606060" />
<rect x="46" y="1220" width="2834" height="2" fill="#d4d4d4" />
<rect x="0" y="1220" width="44" height="2" fill="#606060" />
<rect x="46" y="1258" width="2834" height="2" fill="#d4d4d4" />
<rect x="0" y="1258" width="44" height="2" fill="#606060" />
<rect x="46" y="1298" width="2834" height="2" fill="#d4d4d4" />
<rect x="0" y="1298" width="44" height="2" fill="#606060" />
<rect x="46" y="1336" width="2834" height="2" fill="#d4d4d4" />
<rect x="0" y="1336" width="44" height="2" fill="#606060" />
<rect x="46" y="1368" width="2834" height="2" fill="#d4d4d4" />
<rect x="0" y="1368" width="44" height="2" fill="#606060" />
<rect x="46" y="1400" width="2834" height="2" fill="#d4d4d4" />
<rect x="0" y="1400" width="44" height="2" fill="#606060" />
<rect x="46" y="1432" width="2834" height="2" fill="#d4d4d4" />
<rect x="0" y="1432" width="44" height="2" fill="#606060" />
<rect x="46" y="1464" width="2834" height="2" fill="#d4d4d4" />
<rect x="0" y="1464" width="44" height="2" fill="#606060" />
<rect x="46" y="1496" width="2834" height="2" fill="#d4d4d4" />
<rect x="0" y="1496" width="44" height="2" fill="#606060" />
<rect x="46" y="1528" width="2834" height="2" fill="#d4d4d4" />
<rect x="0" y="1528" width="44" height="2" fill="#606060" />
<rect x="46" y="1560" width="2834" height="2" fill="#d4d4d4" />
<rect x="0" y="1560" width="44" height="2" fill="#606060" />
<rect x="46" y="1592" width="2834" height="2" fill="#d4d4d4" />
<rect x="0" y="1592" width="44" height="2" fill="#606060" />
<rect x="46" y="1624" width="2834" height="2" fill="#d4d4d4" />
<rect x="0" y="1624" width="44" height="2" fill="#606060" />
<rect x="46" y="1656" width="2834" height="2" fill="#d4d4d4" />
<rect x="0" y="1656" width="44" height="2" fill="#606060" />
<rect x="46" y="1688" width="2834" height="2" fill="#d4d4d4" />
<rect x="0" y="1688" width="44" height="2" fill="#606060" />
<rect x="174" y="388" width="2" height="1314" fill="#d4d4d4" />
<rect x="174" y="344" width="2" height="42" fill="#5f5f5f" />
<rect x="304" y="388" width="2" height="1314" fill="#d4d4d4" />
<rect x="304" y="344" width="2" height="42" fill="#5f5f5f" />
<rect x="434" y="388" width="2" height="1314" fill="#d4d4d4" />
<rect x="434" y="344" width="2" height="42" fill="#5f5f5f" />
<rect x="564" y="388" width="2" height="1314" fill="#d4d4d4" />
<rect x="564" y="344" width="2" height="42" fill="#5f5f5f" />
<rect x="694" y="388" width="2" height="1314" fill="#d4d4d4" />
<rect x="694" y="344" width="2" height="42" fill="#5f5f5f" />
<rect x="824" y="388" width="2" height="1314" fill="#d4d4d4" />
<rect x="824" y="344" width="2" height="42" fill="#5f5f5f" />
<rect x="954" y="388" width="2" height="1314" fill="#d4d4d4" />
<rect x="954" y="344" width="2" height="42" fill="#5f5f5f" />
<rect x="1084" y="388" width="2" height="1314" fill="#d4d4d4" />
<rect x="1084" y="344" width="2" height="42" fill="#5f5f5f" />
<rect x="1536" y="388" width="2" height="1314" fill="#d4d4d4" />
<rect x="1536" y="344" width="2" height="42" fill="#5f5f5f" />
<rect x="1666" y="388" width="2" height="1314" fill="#d4d4d4" />
<rect x="1666" y="344" width="2" height="42" fill="#5f5f5f" />
<rect x="1796" y="388" width="2" height="1314" fill="#d4d4d4" />
<rect x="1796" y="344" width="2" height="42" fill="#5f5f5f" />
<rect x="1926" y="388" width="2" height="1314" fill="#d4d4d4" />
<rect x="1926" y="344" width="2" height="42" fill="#5f5f5f" />
<rect x="2056" y="388" width="2" height="1314" fill="#d4d4d4" />
<rect x="2056" y="344" width="2" height="42" fill="#5f5f5f" />
<rect x="2186" y="388" width="2" height="1314" fill="#d4d4d4" />
<rect x="2186" y="344" width="2" height="42" fill="#5f5f5f" />
<rect x="2316" y="388" width="2" height="1314" fill="#d4d4d4" />
<rect x="2316" y="344" width="2" height="42" fill="#5f5f5f" />
<rect x="2446" y="388" width="2" height="1314" fill="#d4d4d4" />
<rect x="2446" y="344" width="2" height="42" fill="#5f5f5f" />
<rect x="2576" y="388" width="2" height="1314" fill="#d4d4d4" />
<rect x="2576" y="344" width="2" height="42" fill="#5f5f5f" />
<rect x="2706" y="388" width="2" height="1314" fill="#d4d4d4" />
<rect x="2706" y="344" width="2" height="42" fill="#5f5f5f" />
<rect x="2836" y="388" width="2" height="1314" fill="#d4d4d4" />
<rect x="2836" y="344" width="2" height="42" fill="#5f5f5f" />
<rect x="176" y="516" width="388" height="62" fill="#ffffff" />
<text x="104.31" y="374.10" font-size="22.97" textLength="13.38" lengthAdjust="spacingAndGlyphs" font-weight="normal" fill="#ffffff" stroke="#fff" stroke-width="0.7">A</text>
<text x="233.90" y="374.10" font-size="22.97" textLength="13.41" lengthAdjust="spacingAndGlyphs" font-weight="normal" fill="#ffffff" stroke="#fff" stroke-width="0.7">B</text>
<text x="364.04" y="374.10" font-size="22.97" textLength="12.89" lengthAdjust="spacingAndGlyphs" font-weight="normal" fill="#ffffff" stroke="#fff" stroke-width="0.7">C</text>
<text x="493.82" y="374.10" font-size="22.97" textLength="15.24" lengthAdjust="spacingAndGlyphs" font-weight="normal" fill="#ffffff" stroke="#fff" stroke-width="0.7">D</text>
<text x="624.17" y="374.10" font-size="22.97" textLength="11.20" lengthAdjust="spacingAndGlyphs" font-weight="normal" fill="#ffffff" stroke="#fff" stroke-width="0.7">E</text>
<text x="754.16" y="374.10" font-size="22.97" textLength="10.37" lengthAdjust="spacingAndGlyphs" font-weight="normal" fill="#ffffff" stroke="#fff" stroke-width="0.7">F</text>
<text x="881.71" y="374.10" font-size="22.97" textLength="16.08" lengthAdjust="spacingAndGlyphs" font-weight="normal" fill="#ffffff" stroke="#fff" stroke-width="0.7">G</text>
<text x="1013.57" y="374.10" font-size="22.97" textLength="15.64" lengthAdjust="spacingAndGlyphs" font-weight="normal" fill="#ffffff" stroke="#fff" stroke-width="0.7">H</text>
<text x="1307.08" y="374.10" font-size="22.97" textLength="8.04" lengthAdjust="spacingAndGlyphs" font-weight="normal" fill="#ffffff" stroke="#fff" stroke-width="0.7">I</text>
<text x="1597.83" y="374.10" font-size="22.97" textLength="7.07" lengthAdjust="spacingAndGlyphs" font-weight="normal" fill="#ffffff" stroke="#fff" stroke-width="0.7">J</text>
<text x="1726.08" y="374.10" font-size="22.97" textLength="11.97" lengthAdjust="spacingAndGlyphs" font-weight="normal" fill="#ffffff" stroke="#fff" stroke-width="0.7">K</text>
<text x="1857.97" y="374.10" font-size="22.97" textLength="10.72" lengthAdjust="spacingAndGlyphs" font-weight="normal" fill="#ffffff" stroke="#fff" stroke-width="0.7">L</text>
<text x="1981.18" y="374.10" font-size="22.97" textLength="22.04" lengthAdjust="spacingAndGlyphs" font-weight="normal" fill="#ffffff" stroke="#fff" stroke-width="0.7">M</text>
<text x="2113.28" y="374.10" font-size="22.97" textLength="16.42" lengthAdjust="spacingAndGlyphs" font-weight="normal" fill="#ffffff" stroke="#fff" stroke-width="0.7">N</text>
<text x="2243.56" y="374.10" font-size="22.97" textLength="16.29" lengthAdjust="spacingAndGlyphs" font-weight="normal" fill="#ffffff" stroke="#fff" stroke-width="0.7">O</text>
<text x="2375.79" y="374.10" font-size="22.97" textLength="12.66" lengthAdjust="spacingAndGlyphs" font-weight="normal" fill="#ffffff" stroke="#fff" stroke-width="0.7">P</text>
<text x="2503.86" y="374.10" font-size="22.97" textLength="17.89" lengthAdjust="spacingAndGlyphs" font-weight="normal" fill="#ffffff" stroke="#fff" stroke-width="0.7">Q</text>
<text x="2636.07" y="374.10" font-size="22.97" textLength="13.01" lengthAdjust="spacingAndGlyphs" font-weight="normal" fill="#ffffff" stroke="#fff" stroke-width="0.7">R</text>
<text x="2765.55" y="374.10" font-size="22.97" textLength="11.70" lengthAdjust="spacingAndGlyphs" font-weight="normal" fill="#ffffff" stroke="#fff" stroke-width="0.7">S</text>
<text x="15.74" y="412.00" font-size="23.55" textLength="12.31" lengthAdjust="spacingAndGlyphs" font-weight="normal" fill="#ffffff" stroke="#fff" stroke-width="0.6">1</text>
<text x="16.05" y="444.00" font-size="23.55" textLength="12.31" lengthAdjust="spacingAndGlyphs" font-weight="normal" fill="#ffffff" stroke="#fff" stroke-width="0.6">2</text>
<text x="16.11" y="476.00" font-size="23.55" textLength="12.31" lengthAdjust="spacingAndGlyphs" font-weight="normal" fill="#ffffff" stroke="#fff" stroke-width="0.6">3</text>
<text x="16.12" y="508.00" font-size="23.55" textLength="12.31" lengthAdjust="spacingAndGlyphs" font-weight="normal" fill="#ffffff" stroke="#fff" stroke-width="0.6">4</text>
<text x="16.07" y="540.00" font-size="23.55" textLength="12.31" lengthAdjust="spacingAndGlyphs" font-weight="normal" fill="#ffffff" stroke="#fff" stroke-width="0.6">5</text>
<text x="15.97" y="572.00" font-size="23.55" textLength="12.31" lengthAdjust="spacingAndGlyphs" font-weight="normal" fill="#ffffff" stroke="#fff" stroke-width="0.6">6</text>
<text x="16.03" y="604.00" font-size="23.55" textLength="12.31" lengthAdjust="spacingAndGlyphs" font-weight="normal" fill="#ffffff" stroke="#fff" stroke-width="0.6">7</text>
<text x="16.05" y="642.00" font-size="23.55" textLength="12.31" lengthAdjust="spacingAndGlyphs" font-weight="normal" fill="#ffffff" stroke="#fff" stroke-width="0.6">8</text>
<text x="16.05" y="680.00" font-size="23.55" textLength="12.31" lengthAdjust="spacingAndGlyphs" font-weight="normal" fill="#ffffff" stroke="#fff" stroke-width="0.6">9</text>
<text x="9.48" y="718.00" font-size="23.55" textLength="24.62" lengthAdjust="spacingAndGlyphs" font-weight="normal" fill="#ffffff" stroke="#fff" stroke-width="0.6">10</text>
<text x="9.59" y="756.00" font-size="23.55" textLength="24.62" lengthAdjust="spacingAndGlyphs" font-weight="normal" fill="#ffffff" stroke="#fff" stroke-width="0.6">11</text>
<text x="9.60" y="794.00" font-size="23.55" textLength="24.62" lengthAdjust="spacingAndGlyphs" font-weight="normal" fill="#ffffff" stroke="#fff" stroke-width="0.6">12</text>
<text x="9.53" y="832.00" font-size="23.55" textLength="24.62" lengthAdjust="spacingAndGlyphs" font-weight="normal" fill="#ffffff" stroke="#fff" stroke-width="0.6">13</text>
<text x="9.37" y="870.00" font-size="23.55" textLength="24.62" lengthAdjust="spacingAndGlyphs" font-weight="normal" fill="#ffffff" stroke="#fff" stroke-width="0.6">14</text>
<text x="9.51" y="908.00" font-size="23.55" textLength="24.62" lengthAdjust="spacingAndGlyphs" font-weight="normal" fill="#ffffff" stroke="#fff" stroke-width="0.6">15</text>
<text x="9.53" y="946.00" font-size="23.55" textLength="24.62" lengthAdjust="spacingAndGlyphs" font-weight="normal" fill="#ffffff" stroke="#fff" stroke-width="0.6">16</text>
<text x="9.60" y="984.00" font-size="23.55" textLength="24.62" lengthAdjust="spacingAndGlyphs" font-weight="normal" fill="#ffffff" stroke="#fff" stroke-width="0.6">17</text>
<text x="9.53" y="1022.00" font-size="23.55" textLength="24.62" lengthAdjust="spacingAndGlyphs" font-weight="normal" fill="#ffffff" stroke="#fff" stroke-width="0.6">18</text>
<text x="9.57" y="1060.00" font-size="23.55" textLength="24.62" lengthAdjust="spacingAndGlyphs" font-weight="normal" fill="#ffffff" stroke="#fff" stroke-width="0.6">19</text>
<text x="9.77" y="1098.00" font-size="23.55" textLength="24.62" lengthAdjust="spacingAndGlyphs" font-weight="normal" fill="#ffffff" stroke="#fff" stroke-width="0.6">20</text>
<text x="9.87" y="1136.00" font-size="23.55" textLength="24.62" lengthAdjust="spacingAndGlyphs" font-weight="normal" fill="#ffffff" stroke="#fff" stroke-width="0.6">21</text>
<text x="9.89" y="1174.00" font-size="23.55" textLength="24.62" lengthAdjust="spacingAndGlyphs" font-weight="normal" fill="#ffffff" stroke="#fff" stroke-width="0.6">22</text>
<text x="9.82" y="1214.00" font-size="23.55" textLength="24.62" lengthAdjust="spacingAndGlyphs" font-weight="normal" fill="#ffffff" stroke="#fff" stroke-width="0.6">23</text>
<text x="9.66" y="1252.00" font-size="23.55" textLength="24.62" lengthAdjust="spacingAndGlyphs" font-weight="normal" fill="#ffffff" stroke="#fff" stroke-width="0.6">24</text>
<text x="9.80" y="1292.00" font-size="23.55" textLength="24.62" lengthAdjust="spacingAndGlyphs" font-weight="normal" fill="#ffffff" stroke="#fff" stroke-width="0.6">25</text>
<text x="9.82" y="1330.00" font-size="23.55" textLength="24.62" lengthAdjust="spacingAndGlyphs" font-weight="normal" fill="#ffffff" stroke="#fff" stroke-width="0.6">26</text>
<text x="9.89" y="1362.00" font-size="23.55" textLength="24.62" lengthAdjust="spacingAndGlyphs" font-weight="normal" fill="#ffffff" stroke="#fff" stroke-width="0.6">27</text>
<text x="9.81" y="1394.00" font-size="23.55" textLength="24.62" lengthAdjust="spacingAndGlyphs" font-weight="normal" fill="#ffffff" stroke="#fff" stroke-width="0.6">28</text>
<text x="9.86" y="1426.00" font-size="23.55" textLength="24.62" lengthAdjust="spacingAndGlyphs" font-weight="normal" fill="#ffffff" stroke="#fff" stroke-width="0.6">29</text>
<text x="9.90" y="1458.00" font-size="23.55" textLength="24.62" lengthAdjust="spacingAndGlyphs" font-weight="normal" fill="#ffffff" stroke="#fff" stroke-width="0.6">30</text>
<text x="10.01" y="1490.00" font-size="23.55" textLength="24.62" lengthAdjust="spacingAndGlyphs" font-weight="normal" fill="#ffffff" stroke="#fff" stroke-width="0.6">31</text>
<text x="10.03" y="1522.00" font-size="23.55" textLength="24.62" lengthAdjust="spacingAndGlyphs" font-weight="normal" fill="#ffffff" stroke="#fff" stroke-width="0.6">32</text>
<text x="9.96" y="1554.00" font-size="23.55" textLength="24.62" lengthAdjust="spacingAndGlyphs" font-weight="normal" fill="#ffffff" stroke="#fff" stroke-width="0.6">33</text>
<text x="9.79" y="1586.00" font-size="23.55" textLength="24.62" lengthAdjust="spacingAndGlyphs" font-weight="normal" fill="#ffffff" stroke="#fff" stroke-width="0.6">34</text>
<text x="9.93" y="1618.00" font-size="23.55" textLength="24.62" lengthAdjust="spacingAndGlyphs" font-weight="normal" fill="#ffffff" stroke="#fff" stroke-width="0.6">35</text>
<text x="9.96" y="1650.00" font-size="23.55" textLength="24.62" lengthAdjust="spacingAndGlyphs" font-weight="normal" fill="#ffffff" stroke="#fff" stroke-width="0.6">36</text>
<text x="10.03" y="1682.00" font-size="23.55" textLength="24.62" lengthAdjust="spacingAndGlyphs" font-weight="normal" fill="#ffffff" stroke="#fff" stroke-width="0.6">37</text>
<clipPath id="r38"><rect x="0" y="1690" width="44" height="12"/></clipPath>
<text x="9.17" y="1714.00" font-size="23.55" textLength="26.19" lengthAdjust="spacingAndGlyphs" font-weight="normal" fill="#ffffff" clip-path="url(#r38)">38</text>
<text x="267.37" y="558.30" font-size="30.52" textLength="207.03" lengthAdjust="spacingAndGlyphs" font-weight="bold" fill="#000">IL MIO BUDGET</text>
<text x="451.59" y="639.30" font-size="27.03" textLength="108.83" lengthAdjust="spacingAndGlyphs" font-weight="bold" fill="#000">01/01/22</text>
<text x="581.19" y="639.30" font-size="27.03" textLength="108.83" lengthAdjust="spacingAndGlyphs" font-weight="bold" fill="#000">01/02/22</text>
<text x="710.99" y="639.30" font-size="27.03" textLength="108.83" lengthAdjust="spacingAndGlyphs" font-weight="bold" fill="#000">01/03/22</text>
<text x="841.09" y="639.30" font-size="27.03" textLength="108.83" lengthAdjust="spacingAndGlyphs" font-weight="bold" fill="#000">01/04/22</text>
<text x="179.70" y="677.90" font-size="27.03" textLength="106.08" lengthAdjust="spacingAndGlyphs" font-weight="bold" fill="#00b050">ENTRATE</text>
<text x="179.57" y="715.90" font-size="26.45" textLength="124.65" lengthAdjust="spacingAndGlyphs" font-weight="normal" fill="#000" stroke="#000" stroke-width="0.45">Stipendio 1</text>
<text x="179.57" y="753.90" font-size="26.45" textLength="124.68" lengthAdjust="spacingAndGlyphs" font-weight="normal" fill="#000" stroke="#000" stroke-width="0.45">Stipendio 2</text>
<text x="495.84" y="715.90" font-size="26.45" textLength="64.47" lengthAdjust="spacingAndGlyphs" font-weight="normal" fill="#000" stroke="#000" stroke-width="0.45">1.000</text>
<text x="625.44" y="715.90" font-size="26.45" textLength="64.47" lengthAdjust="spacingAndGlyphs" font-weight="normal" fill="#000" stroke="#000" stroke-width="0.45">1.000</text>
<text x="755.24" y="715.90" font-size="26.45" textLength="64.47" lengthAdjust="spacingAndGlyphs" font-weight="normal" fill="#000" stroke="#000" stroke-width="0.45">1.000</text>
<text x="885.34" y="715.90" font-size="26.45" textLength="64.47" lengthAdjust="spacingAndGlyphs" font-weight="normal" fill="#000" stroke="#000" stroke-width="0.45">1.000</text>
<text x="495.84" y="753.90" font-size="26.45" textLength="64.47" lengthAdjust="spacingAndGlyphs" font-weight="normal" fill="#000" stroke="#000" stroke-width="0.45">1.200</text>
<text x="625.44" y="753.90" font-size="26.45" textLength="64.47" lengthAdjust="spacingAndGlyphs" font-weight="normal" fill="#000" stroke="#000" stroke-width="0.45">1.000</text>
<text x="755.24" y="753.90" font-size="26.45" textLength="64.47" lengthAdjust="spacingAndGlyphs" font-weight="normal" fill="#000" stroke="#000" stroke-width="0.45">1.300</text>
<text x="885.34" y="753.90" font-size="26.45" textLength="64.47" lengthAdjust="spacingAndGlyphs" font-weight="normal" fill="#000" stroke="#000" stroke-width="0.45">1.200</text>
<text x="179.86" y="1057.80" font-size="27.03" textLength="81.91" lengthAdjust="spacingAndGlyphs" font-weight="bold" fill="#ff0000">USCITE</text>
<text x="180.64" y="1095.80" font-size="26.45" textLength="72.34" lengthAdjust="spacingAndGlyphs" font-weight="normal" fill="#000" stroke="#000" stroke-width="0.45">Affitto</text>
<text x="178.96" y="1133.80" font-size="26.45" textLength="91.05" lengthAdjust="spacingAndGlyphs" font-weight="normal" fill="#000" stroke="#000" stroke-width="0.45">Bollette</text>
<text x="179.14" y="1171.80" font-size="26.45" textLength="58.66" lengthAdjust="spacingAndGlyphs" font-weight="normal" fill="#000" stroke="#000" stroke-width="0.45">Extra</text>
<text x="179.95" y="1209.80" font-size="27.03" textLength="87.60" lengthAdjust="spacingAndGlyphs" font-weight="bold" fill="#000">TOTALE</text>
<text x="517.98" y="1095.80" font-size="26.45" textLength="42.31" lengthAdjust="spacingAndGlyphs" font-weight="normal" fill="#000" stroke="#000" stroke-width="0.45">500</text>
<text x="647.58" y="1095.80" font-size="26.45" textLength="42.31" lengthAdjust="spacingAndGlyphs" font-weight="normal" fill="#000" stroke="#000" stroke-width="0.45">500</text>
<text x="777.38" y="1095.80" font-size="26.45" textLength="42.31" lengthAdjust="spacingAndGlyphs" font-weight="normal" fill="#000" stroke="#000" stroke-width="0.45">500</text>
<text x="907.48" y="1095.80" font-size="26.45" textLength="42.31" lengthAdjust="spacingAndGlyphs" font-weight="normal" fill="#000" stroke="#000" stroke-width="0.45">500</text>
<text x="531.48" y="1133.80" font-size="26.45" textLength="28.83" lengthAdjust="spacingAndGlyphs" font-weight="normal" fill="#000" stroke="#000" stroke-width="0.45">60</text>
<text x="661.28" y="1133.80" font-size="26.45" textLength="28.62" lengthAdjust="spacingAndGlyphs" font-weight="normal" fill="#000" stroke="#000" stroke-width="0.45">80</text>
<text x="790.99" y="1133.80" font-size="26.45" textLength="28.72" lengthAdjust="spacingAndGlyphs" font-weight="normal" fill="#000" stroke="#000" stroke-width="0.45">90</text>
<text x="920.98" y="1133.80" font-size="26.45" textLength="28.83" lengthAdjust="spacingAndGlyphs" font-weight="normal" fill="#000" stroke="#000" stroke-width="0.45">60</text>
<text x="517.02" y="1171.80" font-size="26.45" textLength="43.29" lengthAdjust="spacingAndGlyphs" font-weight="normal" fill="#000" stroke="#000" stroke-width="0.45">100</text>
<text x="646.62" y="1171.80" font-size="26.45" textLength="43.29" lengthAdjust="spacingAndGlyphs" font-weight="normal" fill="#000" stroke="#000" stroke-width="0.45">120</text>
<text x="791.08" y="1171.80" font-size="26.45" textLength="28.62" lengthAdjust="spacingAndGlyphs" font-weight="normal" fill="#000" stroke="#000" stroke-width="0.45">80</text>
<text x="921.09" y="1171.80" font-size="26.45" textLength="28.72" lengthAdjust="spacingAndGlyphs" font-weight="normal" fill="#000" stroke="#000" stroke-width="0.45">90</text>
<text x="517.70" y="1209.80" font-size="26.45" textLength="42.59" lengthAdjust="spacingAndGlyphs" font-weight="normal" fill="#000" stroke="#000" stroke-width="0.45">660</text>
<text x="647.29" y="1209.80" font-size="26.45" textLength="42.61" lengthAdjust="spacingAndGlyphs" font-weight="normal" fill="#000" stroke="#000" stroke-width="0.45">700</text>
<text x="777.10" y="1209.80" font-size="26.45" textLength="42.59" lengthAdjust="spacingAndGlyphs" font-weight="normal" fill="#000" stroke="#000" stroke-width="0.45">670</text>
<text x="907.20" y="1209.80" font-size="26.45" textLength="42.59" lengthAdjust="spacingAndGlyphs" font-weight="normal" fill="#000" stroke="#000" stroke-width="0.45">650</text>
<text x="1090.12" y="753.50" font-size="27.03" textLength="73.74" lengthAdjust="spacingAndGlyphs" font-weight="bold" fill="#000">Totale</text>
<text x="1597.07" y="753.50" font-size="26.45" textLength="65.36" lengthAdjust="spacingAndGlyphs" font-weight="normal" fill="#000" stroke="#000" stroke-width="0.45">8.700</text>
<text x="1089.36" y="791.90" font-size="27.03" textLength="311.47" lengthAdjust="spacingAndGlyphs" font-weight="bold" fill="#000">Quanti stipendi da € 1.200</text>
<text x="1646.30" y="791.90" font-size="26.45" textLength="16.60" lengthAdjust="spacingAndGlyphs" font-weight="normal" fill="#000" stroke="#000" stroke-width="0.45">2</text>
<text x="1089.70" y="829.10" font-size="27.03" textLength="223.86" lengthAdjust="spacingAndGlyphs" font-weight="bold" fill="#000">Stipendio massimo</text>
<text x="1597.94" y="829.10" font-size="26.45" textLength="64.47" lengthAdjust="spacingAndGlyphs" font-weight="normal" fill="#000" stroke="#000" stroke-width="0.45">1.300</text>
<text x="1089.69" y="867.50" font-size="27.03" textLength="207.48" lengthAdjust="spacingAndGlyphs" font-weight="bold" fill="#000">Stipendio minimo</text>
<text x="1597.94" y="867.50" font-size="26.45" textLength="64.47" lengthAdjust="spacingAndGlyphs" font-weight="normal" fill="#000" stroke="#000" stroke-width="0.45">1.000</text>
<text x="1089.71" y="1209.80" font-size="27.03" textLength="318.45" lengthAdjust="spacingAndGlyphs" font-weight="bold" fill="#000">Numero bollette da pagare</text>
<text x="1647.93" y="1209.80" font-size="26.45" textLength="13.91" lengthAdjust="spacingAndGlyphs" font-weight="normal" fill="#000" stroke="#000" stroke-width="0.45">4</text>
<text x="1089.68" y="1250.00" font-size="27.03" textLength="333.69" lengthAdjust="spacingAndGlyphs" font-weight="bold" fill="#000">Giorni prima di ultimo affitto</text>
<text x="1637.67" y="1250.00" font-size="22.53" textLength="24.49" lengthAdjust="spacingAndGlyphs" font-weight="normal" fill="#000" stroke="#000" stroke-width="0.4">90</text>
<clipPath id="ci25"><rect x="1086" y="1259" width="450" height="40"/></clipPath>
<text x="1089.68" y="1288.00" font-size="27.03" textLength="449.57" lengthAdjust="spacingAndGlyphs" font-weight="bold" fill="#000" clip-path="url(#ci25)">Giorni lavorativi prima di ultimo affitto</text>
<text x="1637.57" y="1288.00" font-size="22.53" textLength="24.66" lengthAdjust="spacingAndGlyphs" font-weight="normal" fill="#000" stroke="#000" stroke-width="0.4">65</text>
<text x="1089.75" y="1328.30" font-size="27.03" textLength="262.10" lengthAdjust="spacingAndGlyphs" font-weight="bold" fill="#000">Media spese per mese</text>
<text x="1625.79" y="1327.80" font-size="22.53" textLength="36.36" lengthAdjust="spacingAndGlyphs" font-weight="normal" fill="#000" stroke="#000" stroke-width="0.4">670</text>
<rect x="1084" y="1220" width="582" height="78" fill="none" stroke="#ff0000" stroke-width="4"/>
<rect x="50" y="1682" width="2043" height="14" fill="#cecece" rx="7" />
<rect x="56" y="1688" width="2030" height="2" fill="#bcbcbc" />
<rect x="0" y="1702" width="2880" height="2" fill="#575757" />
<rect x="0" y="1704" width="2880" height="49" fill="#333333" />
<rect x="0" y="1753" width="2880" height="2.5" fill="#050505" />
<rect x="0" y="1755.5" width="2880" height="44.5" fill="url(#stat)" />
<path d="M43.8,1720.3 L29.8,1730.3 L43.8,1740.2 Z" stroke="none" stroke-width="0" fill="#6a6a6a" />
<path d="M76,1720.3 L90,1730.3 L76,1740.2 Z" stroke="none" stroke-width="0" fill="#6a6a6a" />
<path d="M121,1702 L121,1743 Q121,1747 125,1747 L275,1747 Q279,1747 279,1743 L279,1702 Z" stroke="#5a5a5a" stroke-width="2" fill="#ffffff" />
<rect x="121" y="1700" width="158" height="5" fill="#ffffff" />
<text x="157.46" y="1735.20" font-size="23.98" textLength="81.98" lengthAdjust="spacingAndGlyphs" font-weight="bold" fill="#1e7b46">Foglio1</text>
<rect x="307.8" y="1726.3" width="20.3" height="3" fill="#b3b3b3" />
<rect x="316.5" y="1717.9" width="3" height="19.8" fill="#b3b3b3" />
<rect x="353.7" y="1704" width="1.7" height="40.6" fill="#575757" />
<text x="47.49" y="1785.60" font-size="23.98" textLength="75.89" lengthAdjust="spacingAndGlyphs" font-weight="normal" fill="#e2e2e2" stroke="#e2e2e2" stroke-width="0.4">Pronto</text>
<rect x="2242" y="1755.5" width="74" height="44.5" fill="#5a5a5a" />
<rect x="2267" y="1765" width="24.1" height="24.1" fill="none" rx="1.5" stroke="#ffffff" stroke-width="2.1"/>
<path d="M2275,1765 L2275,1789 M2283.2,1765 L2283.2,1789 M2267,1773 L2291,1773 M2267,1781.3 L2291,1781.3" stroke="#ffffff" stroke-width="2.1" fill="none" />
<rect x="2338" y="1765" width="26.2" height="24.1" fill="none" rx="1.5" stroke="#ffffff" stroke-width="2.1"/>
<rect x="2343.6" y="1768.9" width="14.7" height="16.3" fill="none" stroke="#ffffff" stroke-width="2.1"/>
<path d="M2347,1773 L2355,1773 M2347,1777 L2355,1777 M2347,1781 L2355,1781" stroke="#ffffff" stroke-width="2.0" fill="none" />
<rect x="2409.1" y="1765" width="26" height="24.1" fill="none" rx="1.5" stroke="#ffffff" stroke-width="2.1"/>
<path d="M2416.8,1765 L2416.8,1780 M2424.8,1765 L2424.8,1780 M2409,1780 L2426,1780" stroke="#ffffff" stroke-width="2.1" fill="none" />
<rect x="2473.7" y="1774.8" width="16.1" height="4.3" fill="#ffffff" rx="1.5" />
<rect x="2504" y="1773.7" width="200" height="8.3" fill="#7a7a7a" rx="4.15" />
<circle cx="2603.9" cy="1776.9" r="16" fill="#a9a9a9"/>
<rect x="2717.6" y="1774.9" width="16.3" height="4.2" fill="#ffffff" rx="1" />
<rect x="2723.65" y="1768" width="4.2" height="17.5" fill="#ffffff" rx="1" />
<text x="2767.08" y="1786.40" font-size="26.74" textLength="64.63" lengthAdjust="spacingAndGlyphs" font-weight="normal" fill="#e2e2e2" stroke="#e2e2e2" stroke-width="0.4">100%</text>
</svg></body></html>
